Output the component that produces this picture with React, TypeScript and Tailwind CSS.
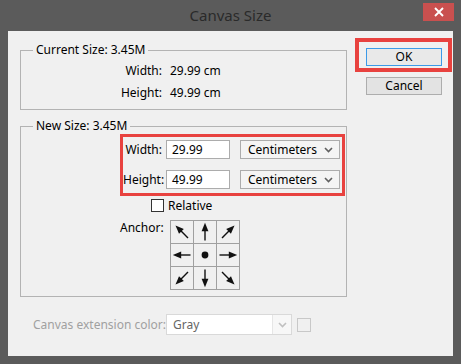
import React from "react";

function Arrow({ rot }: { rot: number }) {
  return (
    <svg width="22" height="22" viewBox="0 0 22 22">
      <g transform={`rotate(${rot} 11 11)`}>
        <line x1="11" y1="19.5" x2="11" y2="9" stroke="#111" strokeWidth="1.4" />
        <polygon points="11,1.8 7.6,10.2 14.4,10.2" fill="#111" />
      </g>
    </svg>
  );
}

function Dot() {
  return (
    <svg width="22" height="22" viewBox="0 0 22 22">
      <circle cx="11" cy="11" r="3.4" fill="#111" />
    </svg>
  );
}

function Chevron({ color }: { color: string }) {
  return (
    <svg width="9" height="6" viewBox="0 0 9 6">
      <path d="M1 1L4.5 4.5L8 1" fill="none" stroke={color} strokeWidth="1.6" />
    </svg>
  );
}

export default function App() {
  const cells: (number | null)[] = [315, 0, 45, 270, null, 90, 225, 180, 135];
  return (
    <div className="w-[461px] h-[364px] bg-[#5b5b5b] flex flex-col font-['Noto_Sans',sans-serif] text-[12px] text-black">
      <div className="h-[31px] relative flex items-center justify-center text-[15px] text-[#2a2a2a]">
        <span className="mt-[-1px]">Canvas Size</span>
        <div className="absolute right-[7px] top-[3px] w-[31px] h-[18px] bg-[#c9504f] flex items-center justify-center">
          <svg width="10" height="10" viewBox="0 0 10 10">
            <path d="M1 1L9 9M9 1L1 9" stroke="#fff" strokeWidth="1.9" />
          </svg>
        </div>
      </div>
      <div className="mx-[8px] h-[325px] bg-[#f0f0f0] flex pl-[12px]">
        <div className="w-[327px] flex flex-col pt-[11px]">
          <fieldset className="border border-[#b3b3b3] pl-[12px] pt-[5px] pb-[8px] flex flex-col gap-[6px]">
            <legend className="px-[3px] leading-[16px]">Current Size: 3.45M</legend>
            <div className="flex h-[16px] items-center leading-[16px]">
              <span className="w-[129px] text-right">Width:</span>
              <span className="ml-[8px]">29.99 cm</span>
            </div>
            <div className="flex h-[16px] items-center leading-[16px]">
              <span className="w-[129px] text-right">Height:</span>
              <span className="ml-[8px]">49.99 cm</span>
            </div>
          </fieldset>
          <fieldset className="mt-[8px] border border-[#b3b3b3] pl-[12px] pt-0 pb-[6px] flex flex-col">
            <legend className="px-[3px] leading-[16px]">New Size: 3.45M</legend>
            <div className="ml-[87px] w-[225px] h-[62px] border-[3px] border-[#e8423f] flex flex-col pt-[3px] gap-[11px]">
              {[
                ["Width:", "29.99"],
                ["Height:", "49.99"],
              ].map(([l, v]) => (
                <div key={l} className="flex items-center h-[19px]">
                  <span className="w-[39px] text-right leading-[16px]">{l}</span>
                  <div className="ml-[4px] w-[64px] h-[19px] border border-[#acacac] bg-white pl-[5px] flex items-center leading-[16px]">
                    {v}
                  </div>
                  <div className="ml-[10px] w-[100px] h-[19px] border border-[#acacac] bg-[#f4f4f4] pl-[7px] pr-[6px] flex items-center justify-between leading-[16px]">
                    <span>Centimeters</span>
                    <Chevron color="#606060" />
                  </div>
                </div>
              ))}
            </div>
            <div className="ml-[118px] mt-[3px] flex items-center h-[13px]">
              <div className="w-[13px] h-[13px] border border-[#333] bg-white" />
              <span className="ml-[4px] leading-[16px]">Relative</span>
            </div>
            <div className="ml-[87px] mt-[8px] flex items-start">
              <span className="w-[42px] text-right leading-[16px]">Anchor:</span>
              <div className="ml-[8px] grid grid-cols-3 w-[70px] border-l border-t border-[#a0a0a0]">
                {cells.map((r, i) => (
                  <div key={i} className="w-[23px] h-[23px] border-r border-b border-[#a0a0a0] flex items-center justify-center">
                    {r === null ? <Dot /> : <Arrow rot={r} />}
                  </div>
                ))}
              </div>
            </div>
          </fieldset>
          <div className="mt-[17px] ml-[13px] flex items-center">
            <span className="w-[133px] text-[#a0a0a0] leading-[16px]">Canvas extension color:</span>
            <div className="w-[126px] h-[21px] border border-[#d9d9d9] bg-[#f7f7f7] flex">
              <div className="w-[106px] bg-white border-r border-[#e6e6e6] pl-[6px] flex items-center text-[#666] leading-[16px]">
                Gray
              </div>
              <div className="flex-1 flex items-center justify-center">
                <Chevron color="#c0c0c0" />
              </div>
            </div>
            <div className="ml-[5px] w-[14px] h-[14px] border border-[#c8c8c8]" />
          </div>
        </div>
        <div className="ml-[8px] pt-[7px] flex flex-col">
          <div className="w-[97px] h-[34px] border-4 border-[#e8423f] pt-[6px] pl-[7px]">
            <div className="w-[76px] h-[18px] border border-[#3c9ae8] bg-[#e9e9e9] flex items-center justify-center leading-[16px]">
              OK
            </div>
          </div>
          <div className="mt-[5px] ml-[11px] w-[76px] h-[18px] border border-[#adadad] bg-[#e3e3e3] flex items-center justify-center leading-[16px]">
            Cancel
          </div>
        </div>
      </div>
    </div>
  );
}
